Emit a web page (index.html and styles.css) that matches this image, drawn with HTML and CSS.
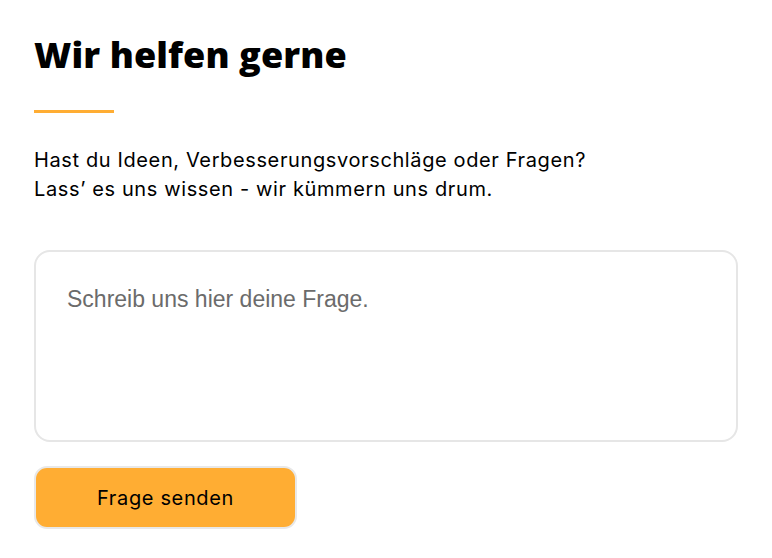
FILE: index.html
```html
<!DOCTYPE html>
<html lang="de">
<head>
<meta charset="utf-8">
<link rel="stylesheet" href="styles.css">
</head>
<body>
<main class="help">
  <h1 class="help-title">Wir helfen gerne</h1>
  <div class="help-rule"></div>
  <p class="help-text">Hast du Ideen, Verbesserungsvorschläge oder Fragen?<br>Lass’ es uns wissen - wir kümmern uns drum.</p>
  <form class="help-form">
    <textarea class="help-input" placeholder="Schreib uns hier deine Frage."></textarea>
    <button type="button" class="help-button">Frage senden</button>
  </form>
</main>
</body>
</html>
```
FILE: styles.css
```css
* { box-sizing: border-box; }
html, body { margin: 0; background: #fff; }
body { font-family: "Inter", "Noto Sans", sans-serif; color: #000; }
.help { padding: 31px 34px 0 34px; display: flex; flex-direction: column; }
.help-title { margin: 0; font-family: "Open Sans", sans-serif; font-size: 36px; font-weight: 800; line-height: 48px; letter-spacing: 0.1px; }
.help-rule { width: 80px; height: 3px; background: #ffad33; margin-top: 31px; }
.help-text { margin: 33px 0 0 0; font-size: 20px; line-height: 29px; letter-spacing: 0.62px; }
.help-form { display: flex; flex-direction: column; align-items: flex-start; margin-top: 46px; }
.help-input { width: 704px; height: 192px; border: 2px solid #e6e6e6; border-radius: 16px; padding: 34px 31px; font-family: "Liberation Sans", Arial, sans-serif; font-size: 23px; resize: none; outline: none; }
.help-input::placeholder { color: #6b6b6b; }
.help-button { margin-top: 24px; width: 263px; height: 63px; background: #ffad33; border: 2px solid #e8e8e8; border-radius: 13px; font-family: "Inter", sans-serif; font-size: 20px; letter-spacing: 0.65px; color: #000; }
```
